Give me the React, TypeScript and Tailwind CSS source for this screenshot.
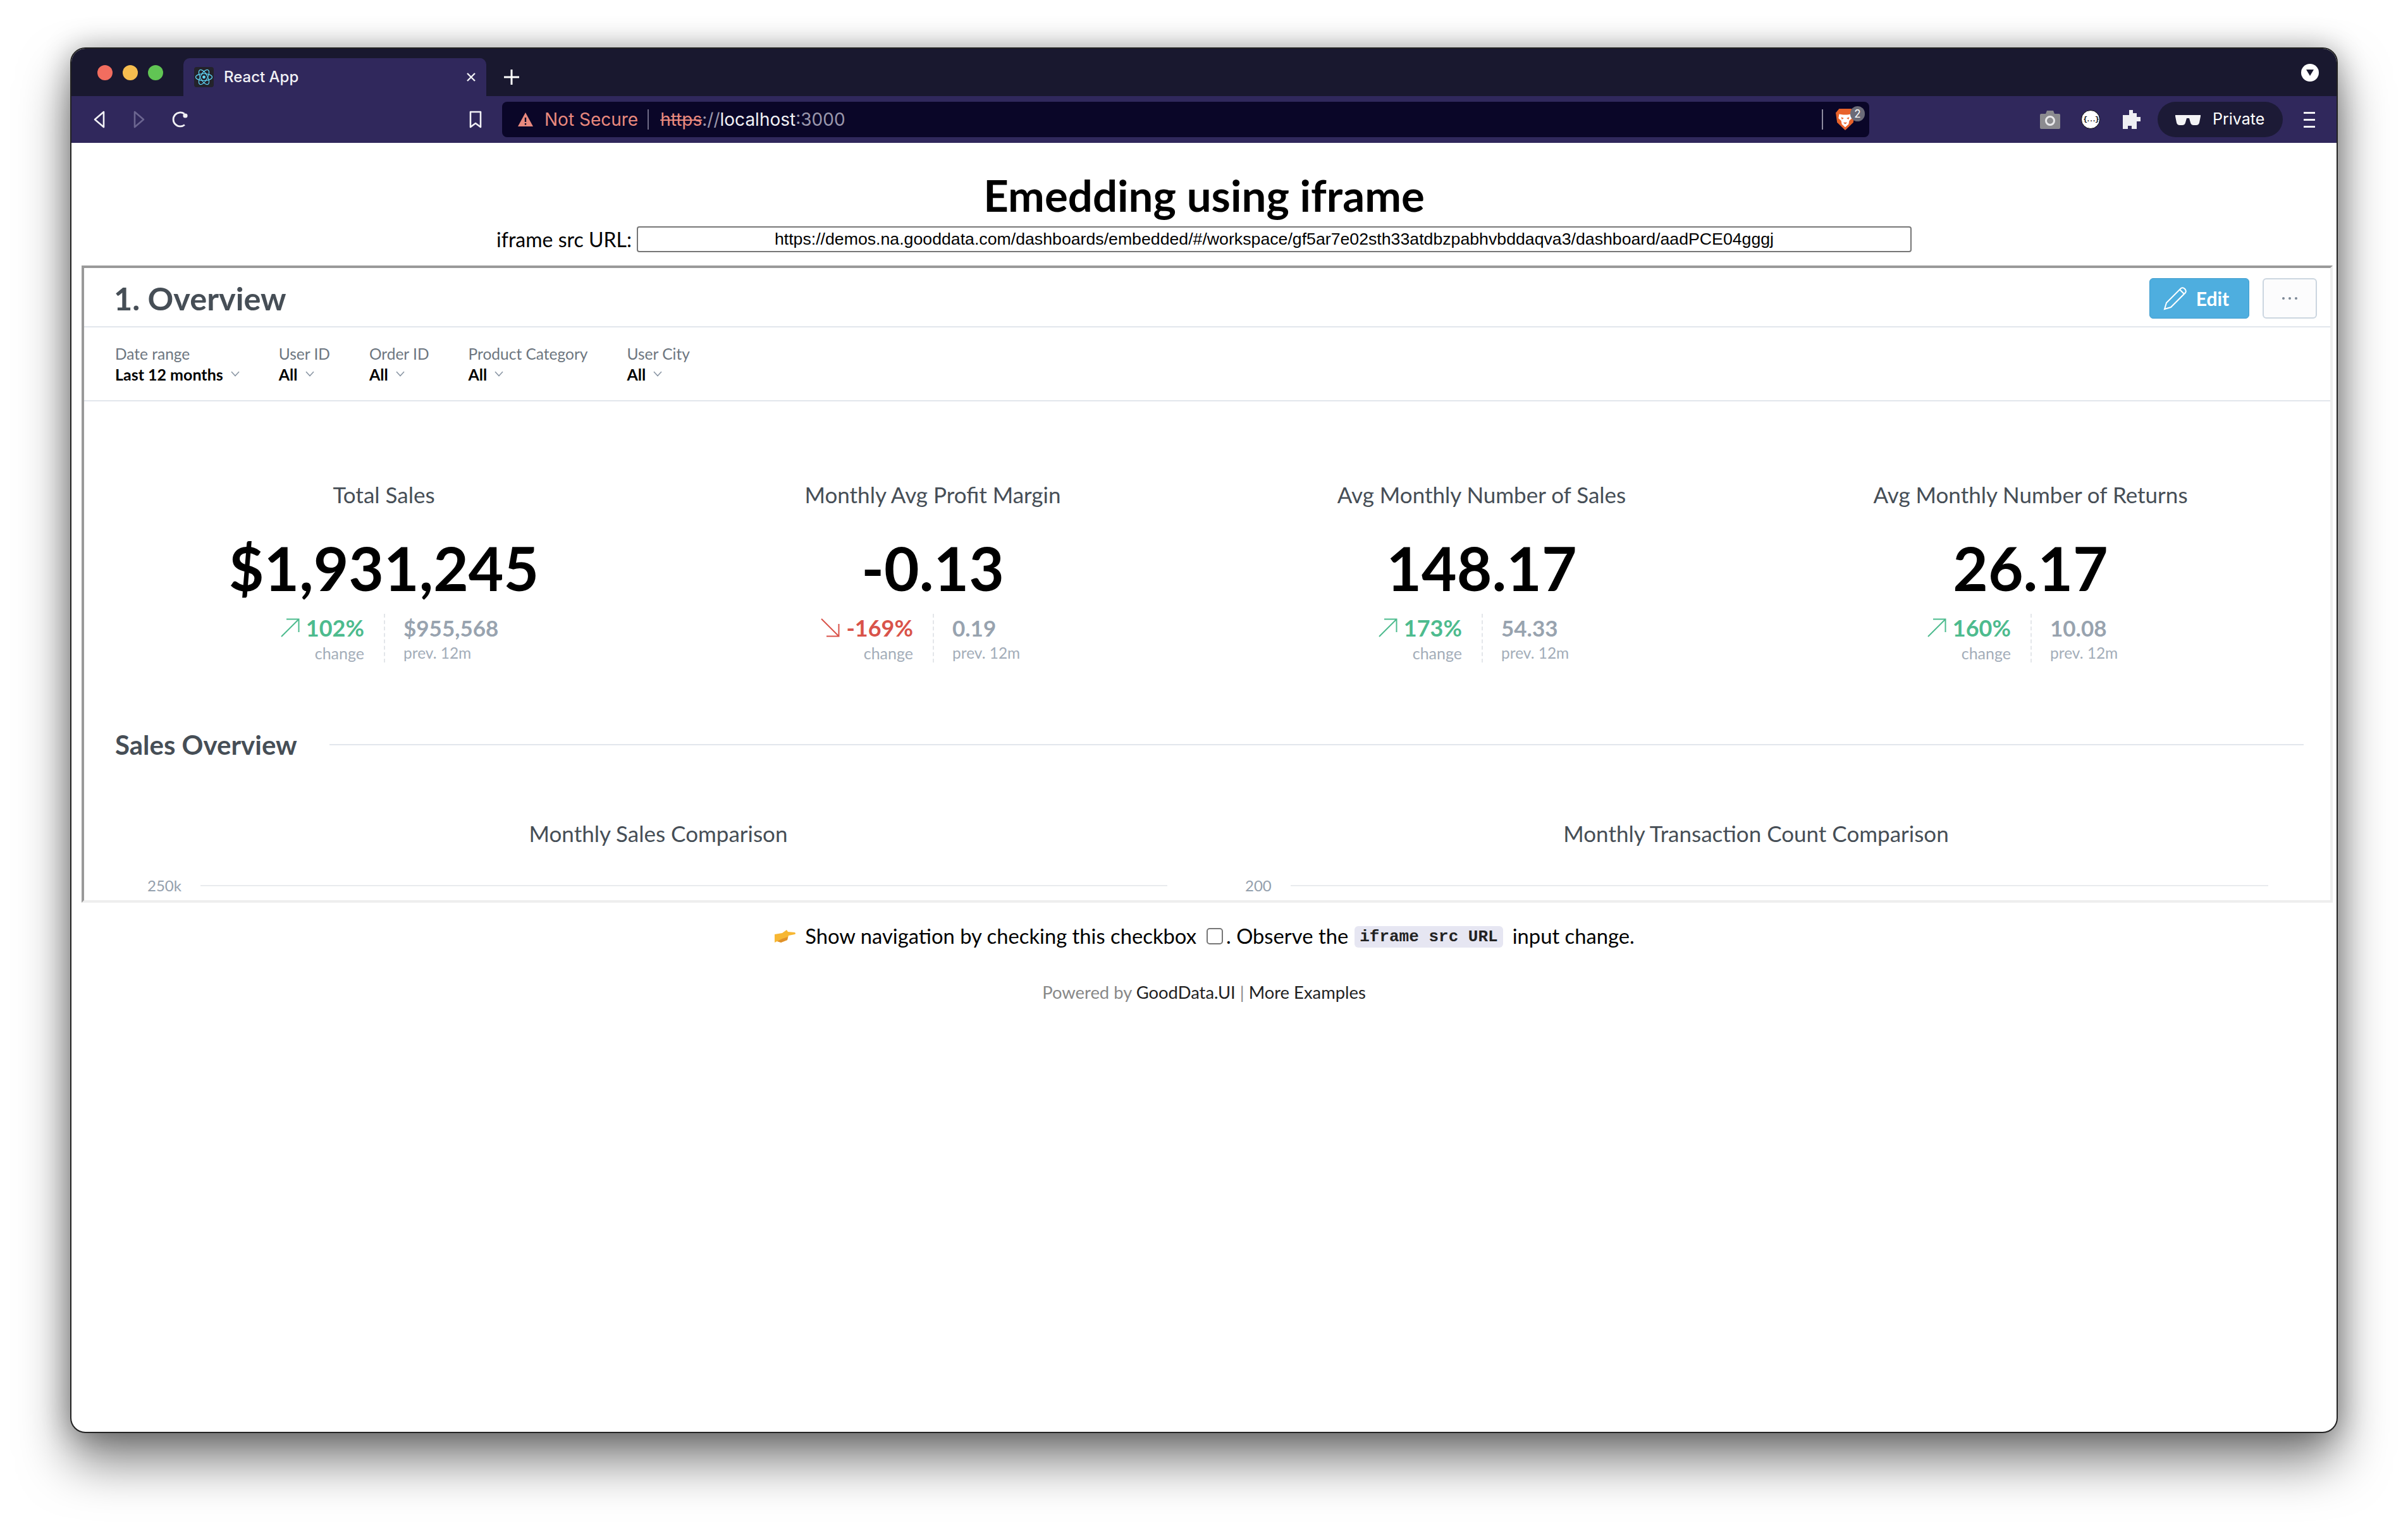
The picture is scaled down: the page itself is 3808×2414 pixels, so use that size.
const kpis = [
  { title: "Total Sales", value: "$1,931,245", change: "102%", prev: "$955,568", up: true },
  { title: "Monthly Avg Profit Margin", value: "-0.13", change: "-169%", prev: "0.19", up: false },
  { title: "Avg Monthly Number of Sales", value: "148.17", change: "173%", prev: "54.33", up: true },
  { title: "Avg Monthly Number of Returns", value: "26.17", change: "160%", prev: "10.08", up: true },
];

const filters = [
  { label: "Date range", value: "Last 12 months" },
  { label: "User ID", value: "All" },
  { label: "Order ID", value: "All" },
  { label: "Product Category", value: "All" },
  { label: "User City", value: "All" },
];

function ReactIcon() {
  return (
    <svg viewBox="0 0 31 32" className="w-[31px] h-[32px] rounded-[4px] bg-[#23232b]" fill="none" stroke="#61dafb" strokeWidth="1.2">
      <ellipse cx="15.5" cy="16" rx="13" ry="5.5" />
      <ellipse cx="15.5" cy="16" rx="13" ry="5.5" transform="rotate(60 15.5 16)" />
      <ellipse cx="15.5" cy="16" rx="13" ry="5.5" transform="rotate(120 15.5 16)" />
      <circle cx="15.5" cy="16" r="2.4" fill="#61dafb" stroke="none" />
    </svg>
  );
}

function Trend({ up }: { up: boolean }) {
  return up ? (
    <svg viewBox="0 0 30 30" className="w-[30px] h-[30px]" fill="none" stroke="#4dbb8e" strokeWidth="2">
      <path d="M1 29 L28 2 M9 1.5 H28.5 V22" />
    </svg>
  ) : (
    <svg viewBox="0 0 30 30" className="w-[30px] h-[30px]" fill="none" stroke="#d9534a" strokeWidth="2">
      <path d="M1 1 L28 28 M9 28.5 H28.5 V9" />
    </svg>
  );
}

function Chevron() {
  return (
    <svg viewBox="0 0 14 9" className="w-[14px] h-[9px]" fill="none" stroke="#8b97a5" strokeWidth="1.6">
      <path d="M1 1 L7 7.5 L13 1" />
    </svg>
  );
}

function Kpi({ item }: { item: (typeof kpis)[number] }) {
  return (
    <div className="flex flex-col items-center">
      <div className="h-[44px] leading-[44px] text-[35px] text-[#464e56]">{item.title}</div>
      <div className="mt-[39px] h-[110px] leading-[110px] text-[96px] font-bold text-black">{item.value}</div>
      <div className="mt-[18px] w-full grid grid-cols-2 h-[77px]">
        <div className="flex flex-col items-end pr-[31px]">
          <div className="flex items-center gap-[10px] h-[44px] text-[36px] font-bold" style={{ color: item.up ? "#4dbb8e" : "#d9534a" }}>
            <Trend up={item.up} />
            <span>{item.change}</span>
          </div>
          <div className="mt-[3px] text-[25px] leading-[30px] text-[#a3adb9]">change</div>
        </div>
        <div className="flex flex-col items-start pl-[29px] border-l-2 border-dashed border-[#e3e6ea]">
          <div className="h-[44px] leading-[44px] text-[35px] font-bold text-[#98a3af]">{item.prev}</div>
          <div className="mt-[3px] text-[24.5px] leading-[30px] text-[#a3adb9]">prev. 12m</div>
        </div>
      </div>
    </div>
  );
}

function ChartStub({ title, tick, pr }: { title: string; tick: string; pr: string }) {
  return (
    <div className="flex flex-col">
      <div className="h-[44px] leading-[44px] text-center text-[35px] text-[#464e56]">{title}</div>
      <div className={`mt-[46px] h-[30px] pl-[60px] flex items-center gap-[30px] ${pr}`}>
        <span className="text-[24px] text-[#94a0ad]">{tick}</span>
        <div className="flex-1 h-[2px] bg-[#e9ebee]" />
      </div>
    </div>
  );
}

function Toolbar() {
  return (
    <div className="h-[74px] bg-[#30285c] flex items-center">
      <svg viewBox="0 0 20 28" className="ml-[34px] w-[20px] h-[28px]" fill="none" stroke="#f1f1f5" strokeWidth="2.6" strokeLinejoin="round">
        <path d="M17 2 L3 14 L17 26 Z" />
      </svg>
      <svg viewBox="0 0 20 28" className="ml-[43px] w-[20px] h-[28px]" fill="none" stroke="#6b6590" strokeWidth="2.6" strokeLinejoin="round">
        <path d="M3 2 L17 14 L3 26 Z" />
      </svg>
      <svg viewBox="0 0 28 28" className="ml-[41px] w-[28px] h-[28px]" fill="none" stroke="#f1f1f5" strokeWidth="2.8">
        <path d="M21 22.5 A11 11 0 1 1 20.5 5" />
        <circle cx="22" cy="8" r="3.6" fill="#f1f1f5" stroke="none" />
      </svg>
      <svg viewBox="0 0 20 28" className="ml-[443px] w-[20px] h-[28px]" fill="none" stroke="#f1f1f5" strokeWidth="2.6" strokeLinejoin="round">
        <path d="M2 2 H18 V26 L10 20 L2 26 Z" />
      </svg>
      <div className="ml-[32px] w-[2162px] h-[56px] rounded-[8px] bg-[#0a0628] flex items-center font-['Inter',sans-serif] text-[28px]">
        <svg viewBox="0 0 26 24" className="ml-[24px] w-[26px] h-[24px]">
          <path d="M13 1 L25 23 H1 Z" fill="#e9897e" />
          <path d="M13 9 V16 M13 18 V20.5" stroke="#0a0628" strokeWidth="2.4" />
        </svg>
        <span className="ml-[17px] text-[#e9897e]">Not Secure</span>
        <div className="ml-[15px] w-[2px] h-[32px] bg-[#6e6a86]" />
        <span className="ml-[18px] text-[#e9897e] line-through">https</span>
        <span className="text-[#9a97ac]">://</span>
        <span className="text-[#f1f1f5]">localhost</span>
        <span className="text-[#9a97ac]">:3000</span>
        <div className="ml-auto mr-[73px] w-[2px] h-[32px] bg-[#8e8b9f]" />
      </div>
      <div className="-ml-[54px] relative w-[32px] h-[36px]">
        <svg viewBox="0 0 30 38" className="w-[32px] h-[36px]" preserveAspectRatio="none">
          <path d="M6 1 H24 L29 8 L27 24 L15 37 L3 24 L1 8 Z" fill="#e8622a" />
          <path d="M6 10 L12 11 H18 L24 10 L25 17 L21 21 L20 27 L15 32 L10 27 L9 21 L5 17 Z" fill="#fff" />
          <path d="M9 15 L13 17 L10 19 Z M21 15 L17 17 L20 19 Z M12 24 H18 L15 27 Z" fill="#e8622a" />
        </svg>
        <div className="absolute -top-[3px] left-[24px] w-[23px] h-[24px] rounded-full bg-[#6b6b78] text-white text-[17px] leading-[24px] text-center font-['Inter',sans-serif]">2</div>
      </div>
      <svg viewBox="0 0 32 30" className="ml-[292px] w-[32px] h-[30px]">
        <path d="M2 6 H9 L11 1 H21 L23 6 H30 Q32 6 32 8 V28 Q32 30 30 30 H2 Q0 30 0 28 V8 Q0 6 2 6 Z" fill="#8b8b8f" />
        <circle cx="16" cy="17" r="6.5" fill="none" stroke="#e8e8ea" strokeWidth="3" />
      </svg>
      <div className="ml-[33px] w-[30px] h-[30px] rounded-full bg-white border border-black flex items-center justify-center text-[11px] tracking-[-2px] font-bold text-black font-['Liberation_Mono',monospace]">{"{...}"}</div>
      <svg viewBox="0 0 28 30" className="ml-[36px] w-[28px] h-[30px]">
        <path d="M10 0 H16 V5 H22 V11 H28 V18 H22 V30 H14 V25 H8 V30 H0 V8 H10 Z" fill="#eeeef2" />
      </svg>
      <div className="ml-[27px] w-[198px] h-[56px] rounded-full bg-[#1c1a36] flex items-center font-['Inter',sans-serif] text-[25px] text-white">
        <svg viewBox="0 0 40 18" className="ml-[28px] w-[40px] h-[18px]">
          <path d="M0 2 H40 V4 L38 14 Q37 18 33 18 H29 Q25 18 24 14 L22 7 H18 L16 14 Q15 18 11 18 H7 Q3 18 2 14 L0 4 Z" fill="#f4f4f6" />
        </svg>
        <span className="ml-[19px]">Private</span>
      </div>
      <div className="ml-[33px] flex flex-col gap-[8px]">
        <div className="w-[18px] h-[3px] bg-[#f1f1f5]" />
        <div className="w-[18px] h-[3px] bg-[#f1f1f5]" />
        <div className="w-[18px] h-[3px] bg-[#f1f1f5]" />
      </div>
    </div>
  );
}

function Dashboard() {
  return (
    <div className="mt-[21px] ml-[16px] mr-[6px] h-[1008px] border-4 border-[#eeeeee] border-t-[#999999] border-l-[#999999] overflow-hidden font-['Lato',sans-serif]">
      <div className="h-[94px] pt-[4px] border-b-2 border-[#e2e6ec] flex items-center pl-[47px] pr-[21px]">
        <span className="text-[50.5px] font-bold text-[#464e56]">1. Overview</span>
        <button className="ml-auto w-[158px] h-[64px] pr-[10px] rounded-[6px] bg-[#4eaedf] border border-[#3f9dce] flex items-center justify-center gap-[14px] text-[30px] font-bold text-white">
          <svg viewBox="0 0 38 38" className="w-[38px] h-[38px]" fill="none" stroke="#fff" strokeWidth="2">
            <path d="M2 36 L5 26 L28 3 Q31 1 34 4 Q37 7 35 10 L12 33 Z M26 5 L33 12" />
          </svg>
          Edit
        </button>
        <button className="ml-[21px] w-[86px] h-[64px] rounded-[6px] bg-[#fcfcfd] border-2 border-[#ccd6e0] flex items-center justify-center gap-[6px]">
          <span className="w-[4px] h-[4px] rounded-full bg-[#7d8896]" />
          <span className="w-[4px] h-[4px] rounded-full bg-[#7d8896]" />
          <span className="w-[4px] h-[4px] rounded-full bg-[#7d8896]" />
        </button>
      </div>
      <div className="h-[117px] border-b-2 border-[#e2e6ec] flex items-center gap-[62px] pl-[49px]">
        {filters.map((f) => (
          <div key={f.label} className="flex flex-col">
            <span className="text-[24.5px] leading-[32px] text-[#6d7680]">{f.label}</span>
            <span className="flex items-center gap-[12px] text-[25px] leading-[32px] font-bold text-black">
              {f.value}
              <Chevron />
            </span>
          </div>
        ))}
      </div>
      <div className="pt-[125px] px-[40px] grid grid-cols-4">
        {kpis.map((k) => (
          <Kpi key={k.title} item={k} />
        ))}
      </div>
      <div className="mt-[105px] h-[50px] pl-[49px] pr-[42px] flex items-center gap-[51px]">
        <span className="text-[42px] font-bold text-[#464e56]">Sales Overview</span>
        <div className="flex-1 h-[2px] bg-[#e2e6ec]" />
      </div>
      <div className="mt-[93px] px-[40px] grid grid-cols-2">
        <ChartStub title="Monthly Sales Comparison" tick="250k" pr="pr-[63px]" />
        <ChartStub title="Monthly Transaction Count Comparison" tick="200" pr="pr-[58px]" />
      </div>
    </div>
  );
}

export default function App() {
  return (
    <div className="w-[3808px] h-[2414px] bg-white pt-[75px] pl-[111px] overflow-hidden">
      <div className="w-[3586px] h-[2192px] rounded-[24px] overflow-hidden border-2 border-[#222] bg-white shadow-[0_45px_80px_rgba(0,0,0,0.5),0_0_45px_rgba(0,0,0,0.3)]">
        <div className="h-[75px] bg-[#19182f] flex items-center">
          <div className="ml-[41px] w-[24px] h-[24px] rounded-full bg-[#f26d5f]" />
          <div className="ml-[16px] w-[24px] h-[24px] rounded-full bg-[#f6bd4f]" />
          <div className="ml-[16px] w-[24px] h-[24px] rounded-full bg-[#61c554]" />
          <div className="ml-[32px] self-end w-[479px] h-[60px] rounded-t-[10px] bg-[#30285c] flex items-center pl-[17px] pr-[16px] font-['Inter',sans-serif] text-[24px] font-medium text-[#f1f1f5]">
            <ReactIcon />
            <span className="ml-[16px]">React App</span>
            <svg viewBox="0 0 16 16" className="ml-auto w-[16px] h-[16px]" fill="none" stroke="#f1f1f5" strokeWidth="2.4">
              <path d="M2 2 L14 14 M14 2 L2 14" />
            </svg>
          </div>
          <svg viewBox="0 0 24 24" className="ml-[28px] mt-[15px] w-[24px] h-[24px]" fill="none" stroke="#fff" strokeWidth="3">
            <path d="M12 0 V24 M0 12 H24" />
          </svg>
          <div className="ml-auto mr-[28px] w-[28px] h-[28px] rounded-full bg-white flex items-center justify-center">
            <svg viewBox="0 0 12 10" className="w-[12px] h-[10px]">
              <path d="M0 0 H12 L6 10 Z" fill="#19182f" />
            </svg>
          </div>
        </div>
        <Toolbar />
        <div className="pt-[43px] font-['Lato',sans-serif]">
          <h1 className="h-[80px] leading-[80px] text-center text-[69px] font-bold text-black">Emedding using iframe</h1>
          <div className="mt-[9px] h-[41px] flex items-center justify-center">
            <span className="text-[32px] text-black">iframe src URL:</span>
            <input
              readOnly
              value="https://demos.na.gooddata.com/dashboards/embedded/#/workspace/gf5ar7e02sth33atdbzpabhvbddaqva3/dashboard/aadPCE04gggj"
              className="ml-[8px] w-[2016px] h-[41px] rounded-[4px] border-2 border-[#767676] text-center text-[26.7px] text-black font-['Liberation_Sans',sans-serif] outline-none"
            />
          </div>
          <Dashboard />
          <div className="mt-[33px] h-[40px] flex items-center justify-center text-[32.75px] text-black">
            <svg viewBox="0 0 36 24" className="w-[36px] h-[24px] mr-[14px]">
              <path d="M2 9 L14 7 L21 2 L23 5 L34 6 Q36 8 34 9 L24 11 L22 18 L12 22 L6 20 L2 22 Z" fill="#f7b733" />
              <path d="M6 20 L12 22 L22 18 L23 13 L14 16 Z" fill="#e0912a" />
            </svg>
            <span>Show navigation by checking this checkbox</span>
            <span className="ml-[16px] w-[26px] h-[26px] rounded-[5px] border-2 border-[#767676] bg-white" />
            <span className="ml-[5px]">. Observe the</span>
            <code className="ml-[10px] mr-[15px] mt-[2px] px-[8px] h-[34px] leading-[34px] rounded-[6px] bg-[#e6e6f2] text-[26px] font-bold text-[#222] font-['Liberation_Mono',monospace]">iframe src URL</code>
            <span>input change.</span>
          </div>
          <div className="mt-[51px] h-[36px] leading-[36px] text-center text-[27.4px] text-[#888]">
            Powered by <span className="text-[#222]">GoodData.UI</span> | <span className="text-[#222]">More Examples</span>
          </div>
        </div>
      </div>
    </div>
  );
}
